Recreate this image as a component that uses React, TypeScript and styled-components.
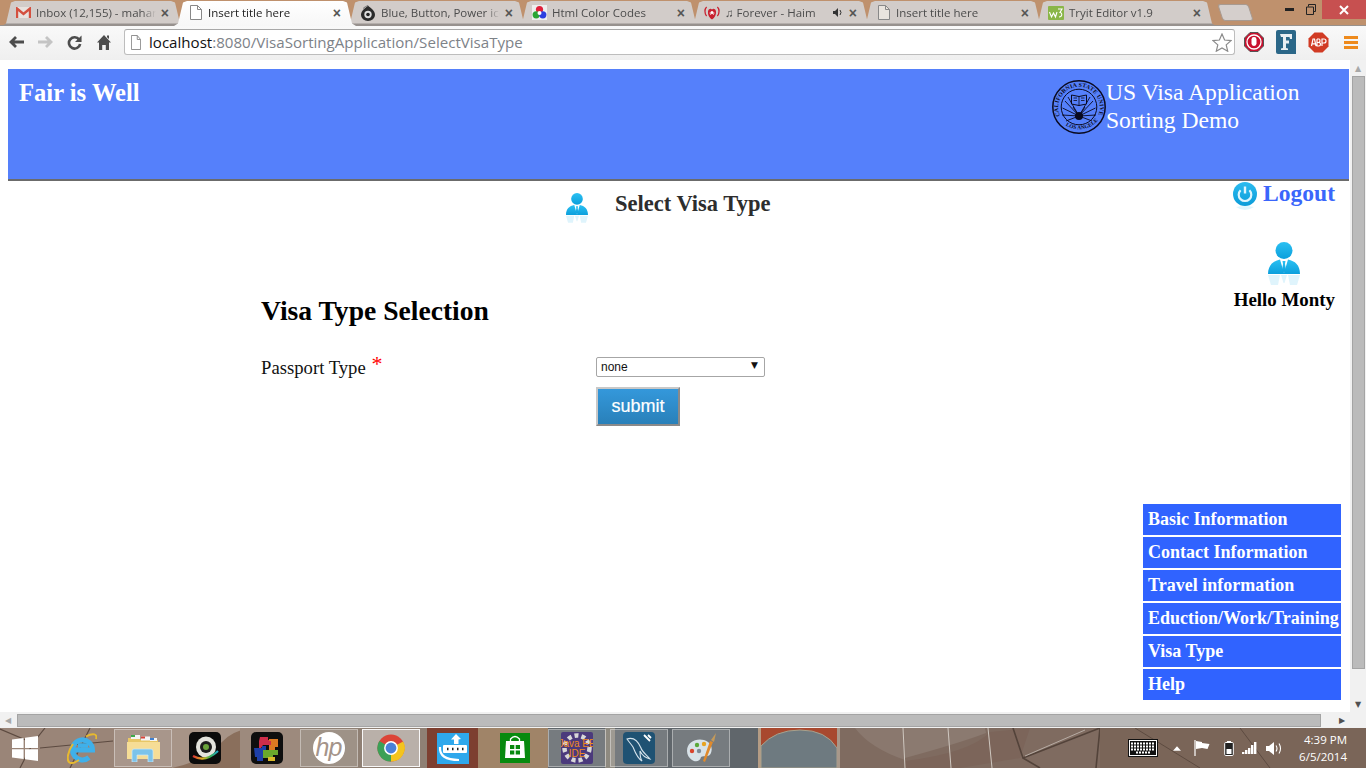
import React from 'react'
import styled, { createGlobalStyle } from 'styled-components'

const GlobalStyle = createGlobalStyle`
  html, body {
    margin: 0;
    padding: 0;
    width: 1366px;
    height: 768px;
    overflow: hidden;
    background: white;
  }
`

const Screen = styled.div`
  display: flex;
  flex-direction: column;
  width: 1366px;
  height: 768px;
  overflow: hidden;
`

/* browser frame */

const TabStrip = styled.div`
  display: flex;
  align-items: flex-end;
  height: 26px;
  padding-left: 2px;
  background: #bf916d;
  box-shadow: inset 0 -1px #98918c;
  position: relative;
`

const Tab = styled.div<{ $active?: boolean }>`
  position: relative;
  z-index: ${(p) => (p.$active ? 2 : 1)};
  display: flex;
  align-items: center;
  gap: 5px;
  flex: none;
  width: 182px;
  height: 25px;
  margin-right: -10px;
  padding: 0 15px 2px 14px;
  box-sizing: border-box;
  clip-path: polygon(0 100%, 4px 90%, 9px 6%, 13px 0, calc(100% - 13px) 0, calc(100% - 9px) 6%, calc(100% - 4px) 90%, 100% 100%);
  background: ${(p) =>
    p.$active
      ? 'linear-gradient(#ffffff, #f7f7f7)'
      : 'linear-gradient(#d2ccc9 0, #d2ccc9 22px, #97918e 23px)'};
  font: 11.5px 'Open Sans', 'Noto Sans', sans-serif;
  color: ${(p) => (p.$active ? '#222' : '#4c4c4c')};
`

const TabLabel = styled.span`
  flex: 1;
  min-width: 0;
  overflow: hidden;
  white-space: nowrap;
  mask-image: linear-gradient(to right, black calc(100% - 14px), transparent);
`

const TabClose = styled.span`
  flex: none;
  font: bold 14px 'Liberation Sans', sans-serif;
  color: #555;
`

const NewTab = styled.div`
  flex: none;
  width: 29px;
  height: 15px;
  margin: 0 0 5px 14px;
  background: #d5cfcc;
  border: 1px solid #a89a90;
  border-radius: 3px;
  transform: skewX(18deg);
`

const WindowButtons = styled.div`
  display: flex;
  align-items: flex-start;
  position: absolute;
  top: 0;
  right: 0;
`

const WindowButton = styled.div<{ $close?: boolean }>`
  display: flex;
  align-items: center;
  justify-content: center;
  width: ${(p) => (p.$close ? '44px' : '22px')};
  height: 19px;
  background: ${(p) => (p.$close ? '#c75050' : 'transparent')};
`

const Toolbar = styled.div`
  display: flex;
  align-items: center;
  height: 34px;
  padding: 0 0 2px 2px;
  box-sizing: border-box;
  background: linear-gradient(#f9f9f9, #efefef);
`

const NavIcon = styled.div`
  display: flex;
  align-items: center;
  justify-content: center;
  flex: none;
  width: 29px;
  height: 24px;
`

const Omnibox = styled.div`
  display: flex;
  align-items: center;
  gap: 8px;
  flex: none;
  width: 1111px;
  height: 26px;
  margin: 0 9px 0 6px;
  padding: 0 2px 0 6px;
  box-sizing: border-box;
  background: white;
  border: 1px solid #bdbdbd;
  border-top-color: #a8a8a8;
  border-radius: 3px;
  font: 15.1px 'Open Sans', 'Noto Sans', sans-serif;
  color: #7d8288;
`

const UrlText = styled.span`
  flex: 1;
  b {
    font-weight: normal;
    color: #111;
  }
`

const ExtensionIcons = styled.div`
  display: flex;
  align-items: center;
  flex: none;
  gap: 12px;
`

const MenuSlot = styled.div`
  display: flex;
  margin-left: 3px;
`

/* page */

const Viewport = styled.div`
  display: flex;
  flex-direction: column;
  flex: 1;
  min-height: 0;
`

const ViewportRow = styled.div`
  display: flex;
  flex: 1;
  min-height: 0;
`

const PageArea = styled.div`
  display: flex;
  flex-direction: column;
  flex: 1;
  min-width: 0;
  padding: 9px 1px 12px 8px;
  background: white;
`

const SiteHeader = styled.header`
  display: flex;
  justify-content: space-between;
  flex: none;
  height: 112px;
  padding: 9px 9px 0 11px;
  box-sizing: border-box;
  background: #5580fb;
  border-bottom: 2px solid #6b6b6b;
  color: white;
  font-family: 'Liberation Serif', serif;
`

const SiteName = styled.div`
  font-weight: bold;
  font-size: 24.6px;
  line-height: 30px;
`

const SiteBrand = styled.div`
  display: flex;
  width: 288px;
  padding-top: 2px;
`

const BrandText = styled.div`
  font-size: 23.6px;
  line-height: 28px;
  margin-top: -2px;
`

const PageBody = styled.div`
  display: flex;
  flex: 1;
  min-height: 0;
  font-family: 'Liberation Serif', serif;
`

const MainColumn = styled.main`
  flex: none;
  width: 1135px;
`

const TitleRow = styled.div`
  display: flex;
  align-items: flex-start;
  gap: 27px;
  padding: 11px 0 0 558px;
  height: 114px;
  box-sizing: border-box;
`

const TitleIcon = styled.div`
  flex: none;
  margin-top: 1px;
`

const PageTitle = styled.h2`
  margin: 0;
  font-size: 22.5px;
  line-height: 24px;
  font-weight: bold;
  color: #2d2d2d;
`

const FormSection = styled.section`
  padding-left: 253px;
`

const FormHeading = styled.h1`
  margin: 0 0 30px;
  font-size: 27.6px;
  line-height: 32px;
  font-weight: bold;
  color: black;
`

const FormGrid = styled.form`
  display: grid;
  grid-template-columns: 335px 169px;
  row-gap: 8px;
  align-items: start;
`

const FieldLabel = styled.label`
  font-size: 18.7px;
  line-height: 22px;
  color: #111;
`

const Required = styled.span`
  margin-left: 1px;
  font-size: 22px;
  line-height: 10px;
  color: #f00;
  vertical-align: 3px;
`

const SelectWrap = styled.div`
  position: relative;
  height: 20px;
  &::after {
    content: '▼';
    position: absolute;
    top: 3px;
    right: 7px;
    font: 9px 'DejaVu Sans', sans-serif;
    color: #111;
    pointer-events: none;
  }
`

const PlainSelect = styled.select`
  appearance: none;
  display: block;
  width: 100%;
  height: 20px;
  padding: 0 0 0 4px;
  background: white;
  border: 1px solid #a6a6a6;
  border-radius: 2px;
  font: 12px 'Liberation Sans', sans-serif;
  color: #111;
`

const SubmitButton = styled.button`
  grid-column: 2;
  justify-self: start;
  width: 84px;
  height: 39px;
  padding: 0;
  background: linear-gradient(#3498db, #2980b9);
  border: 2px solid;
  border-color: #c8c8c8 #8a8a8a #8a8a8a #c8c8c8;
  font: 18px 'Liberation Sans', sans-serif;
  color: white;
  -webkit-text-stroke: 0.2px white;
`

const SideColumn = styled.aside`
  display: flex;
  flex-direction: column;
  align-items: flex-end;
  flex: none;
  width: 198px;
`

const LogoutRow = styled.a`
  display: flex;
  align-items: flex-start;
  gap: 6px;
  margin: 1px 6px 0 0;
  font-size: 23.6px;
  line-height: 24px;
  font-weight: bold;
  color: #3a66fb;
`

const LogoutText = styled.span`
  margin-top: -1px;
`

const UserBlock = styled.div`
  display: flex;
  flex-direction: column;
  align-items: center;
  margin: 30px 6px 0 0;
`

const Greeting = styled.div`
  margin-top: 5px;
  font-size: 18.9px;
  line-height: 20px;
  font-weight: bold;
  color: black;
`

const SideNav = styled.nav`
  display: flex;
  flex-direction: column;
  gap: 2px;
  width: 198px;
  margin-top: auto;
`

const SideNavItem = styled.a`
  display: block;
  height: 31px;
  padding-left: 5px;
  background: #3063ff;
  font-size: 18px;
  line-height: 31px;
  font-weight: bold;
  color: white;
  white-space: nowrap;
`

/* scrollbars */

const VScroll = styled.div`
  display: flex;
  flex-direction: column;
  align-items: center;
  justify-content: space-between;
  flex: none;
  width: 16px;
  background: #f1f1f1;
`

const HScroll = styled.div`
  display: flex;
  align-items: center;
  flex: none;
  height: 16px;
  background: #f1f1f1;
`

const ScrollArrow = styled.div<{ $dim?: boolean }>`
  display: flex;
  align-items: center;
  justify-content: center;
  flex: none;
  width: 16px;
  height: 16px;
  font: 8px 'DejaVu Sans', sans-serif;
  color: ${(p) => (p.$dim ? '#a8a8a8' : '#505050')};
`

const HScrollEnd = styled(ScrollArrow)`
  margin: 0 16px 0 auto;
`

const VThumb = styled.div`
  flex: 1;
  width: 13px;
  margin-bottom: 27px;
  background: #bbbbbb;
  border: 1px solid #a4a4a4;
  box-sizing: border-box;
`

const HThumb = styled.div`
  flex: none;
  width: 1304px;
  height: 13px;
  margin-left: 1px;
  background: #bbbbbb;
  border: 1px solid #a4a4a4;
  box-sizing: border-box;
`

/* taskbar */

const Taskbar = styled.footer`
  position: relative;
  display: flex;
  align-items: stretch;
  flex: none;
  height: 40px;
  background: #7e6c62;
  overflow: hidden;
`

const Wallpaper = styled.svg`
  position: absolute;
  inset: 0;
`

const StartSlot = styled.div`
  position: relative;
  display: flex;
  align-items: center;
  flex: none;
  width: 114px;
  padding-left: 12px;
  box-sizing: border-box;
  gap: 29px;
`

const AppSlots = styled.div`
  position: relative;
  display: flex;
  flex: none;
  gap: 4px;
  padding: 1px 0;
`

const AppSlot = styled.div<{ $open?: boolean; $focused?: boolean }>`
  display: flex;
  align-items: center;
  justify-content: center;
  flex: none;
  width: 58px;
  box-sizing: border-box;
  border: 1px solid
    ${(p) => (p.$focused ? 'rgba(255,255,255,0.9)' : p.$open ? 'rgba(255,255,255,0.38)' : 'transparent')};
  background: ${(p) =>
    p.$focused ? 'rgba(255,255,255,0.38)' : p.$open ? 'rgba(255,255,255,0.14)' : 'transparent'};
`

const SystemTray = styled.div`
  position: relative;
  display: flex;
  align-items: center;
  margin-left: auto;
  padding-right: 19px;
`

const TrayItem = styled.div<{ $left: number }>`
  display: flex;
  flex: none;
  margin-left: ${(p) => p.$left}px;
`

const Clock = styled.div`
  display: flex;
  flex-direction: column;
  align-items: flex-end;
  margin-left: 17px;
  font: 11.5px/17px 'Open Sans', 'Noto Sans', sans-serif;
  color: white;
`

/* drawings */

const PersonIcon: React.FC<{ size: number; id: string }> = ({ size, id }) => (
  <svg width={size} height={size * 1.35} viewBox="0 0 32 43" style={{ display: 'block' }}>
    <defs>
      <linearGradient id={id} x1="0" y1="0" x2="0" y2="1">
        <stop offset="0" stopColor="#2bc0f2" />
        <stop offset="1" stopColor="#0b9fdc" />
      </linearGradient>
    </defs>
    <circle cx="16" cy="8.5" r="8.5" fill={`url(#${id})`} />
    <path d="M0 32 C0 23 5 19 12 17.5 L16 31 L20 17.5 C27 19 32 23 32 32 Z" fill={`url(#${id})`} />
    <path d="M14.5 19 h3 l-.5 3 1 6 -2 3 -2-3 1-6z" fill={`url(#${id})`} />
    <path d="M0 33 H12 L10 43 H3 Z M20 33 H32 L29 43 H22 Z M13 33 H19 L16.5 41 H15.5 Z" fill="#c4ebfa" opacity=".55" />
  </svg>
)

const PowerIcon = () => (
  <svg width="24" height="30" viewBox="0 0 24 30" style={{ flex: 'none', display: 'block' }}>
    <defs>
      <linearGradient id="powerBlue" x1="0" y1="0" x2="0" y2="1">
        <stop offset="0" stopColor="#2bbcf0" />
        <stop offset="1" stopColor="#0b9bd8" />
      </linearGradient>
    </defs>
    <circle cx="12" cy="12" r="12" fill="url(#powerBlue)" />
    <path d="M7.6 8.2 A6.3 6.3 0 1 0 16.4 8.2" fill="none" stroke="#dff5fd" strokeWidth="2.2" />
    <path d="M12 4.5 V11.5" stroke="#dff5fd" strokeWidth="2.4" />
    <path d="M3 25 Q12 31 21 25 Q12 23 3 25Z" fill="#c9eefb" opacity=".6" />
  </svg>
)

const SealLogo = () => (
  <svg width="54" height="54" viewBox="0 0 54 54" style={{ flex: 'none', display: 'block' }}>
    <circle cx="27" cy="27" r="26.2" fill="none" stroke="#0a0a20" strokeWidth="1.5" />
    <circle cx="27" cy="27" r="17.8" fill="none" stroke="#0a0a20" strokeWidth="1" />
    <defs>
      <path id="sealTop" d="M8 36 A20.8 20.8 0 1 1 46 36" />
      <path id="sealBottom" d="M9 41.5 A24.6 24.6 0 0 0 45 41.5" />
    </defs>
    <text fontFamily="Liberation Serif, serif" fontSize="5.9" fontWeight="bold" fill="#0a0a20" letterSpacing=".15">
      <textPath href="#sealTop">CALIFORNIA STATE UNIVERSITY</textPath>
    </text>
    <text fontFamily="Liberation Serif, serif" fontSize="5.4" fontWeight="bold" fill="#0a0a20" letterSpacing=".1">
      <textPath href="#sealBottom" startOffset="6">LOS ANGELES</textPath>
    </text>
    <path d="M27 36 L13 21 M27 36 L16 17 M27 36 L38 17 M27 36 L41 21 M27 36 L10.5 28 M27 36 L43.5 28 M27 36 L10 35 M27 36 L44 35 M27 36 L14 41 M27 36 L40 41 M27 36 L21 27 M27 36 L33 27" stroke="#0a0a20" strokeWidth=".9" />
    <path d="M19.5 15 L27 16.5 L34.5 15 V24 L27 25.5 L19.5 24Z" fill="#5580fb" stroke="#0a0a20" strokeWidth="1" />
    <path d="M27 16.5 V25.5 M21.5 18 H25 M21.5 20.5 H25 M29 18 H32.5 M29 20.5 H32.5" stroke="#0a0a20" strokeWidth=".8" />
    <circle cx="27" cy="36" r="4" fill="#0a0a20" />
  </svg>
)

const PageFile: React.FC<{ dim?: boolean; width?: number }> = ({ dim, width = 12 }) => (
  <svg width={width} height="15" viewBox="0 0 12 15" preserveAspectRatio="none" style={{ flex: 'none' }}>
    <path d="M.5.5 H7.5 L11.5 4.5 V14.5 H.5Z" fill={dim ? '#e9e4de' : 'white'} stroke="#888" />
    <path d="M7.5.5 V4.5 H11.5" fill="none" stroke="#888" />
  </svg>
)

const TabPageFile = styled.span`
  display: flex;
  flex: none;
  margin: 0 1px 0 2px;
`

const GmailIcon = () => (
  <svg width="15" height="11" viewBox="0 0 15 11" style={{ flex: 'none' }}>
    <rect width="15" height="11" fill="#e8e2de" />
    <path d="M1 11 V1.5 L7.5 7 L14 1.5 V11" fill="none" stroke="#d4503f" strokeWidth="2.4" />
  </svg>
)

const EyeFavicon = () => (
  <svg width="16" height="16" viewBox="0 0 16 16" style={{ flex: 'none' }}>
    <path d="M8 .5 C10 3 15 5 15 10 A7 6 0 0 1 1 10 C1 5 6 3 8 .5Z" fill="#2b2b2b" />
    <circle cx="8" cy="9.5" r="3.7" fill="#ddd" />
    <circle cx="8" cy="9.5" r="1.8" fill="#222" />
    <path d="M3 3.5 Q5 1.5 8 .5" fill="none" stroke="#777" />
  </svg>
)

const ColorWheel = () => (
  <svg width="15" height="15" viewBox="0 0 15 15" style={{ flex: 'none' }}>
    <rect width="15" height="15" fill="#eee" />
    <circle cx="7.5" cy="4.6" r="3.6" fill="#e0203a" />
    <circle cx="4.2" cy="9.8" r="3.6" fill="#2aa534" />
    <circle cx="10.8" cy="9.8" r="3.6" fill="#2c3fe0" />
    <circle cx="7.5" cy="8" r="2" fill="white" />
  </svg>
)

const RadioIcon = () => (
  <svg width="16" height="14" viewBox="0 0 16 14" style={{ flex: 'none' }}>
    <path d="M8 13.5 C3 10 3.6 4.6 4.8 3.4 C6 2.2 7.3 2.6 8 3.6 C8.7 2.6 10 2.2 11.2 3.4 C12.4 4.6 13 10 8 13.5Z" fill="#c8202f" />
    <path d="M2.6 10 C.2 7 .6 3 2.6 1 M13.4 10 C15.8 7 15.4 3 13.4 1" fill="none" stroke="#c8202f" strokeWidth="1.3" />
    <circle cx="8" cy="6.5" r="1.5" fill="white" />
    <path d="M6 6.5 Q6 8 7 9 M10 6.5 Q10 8 9 9" fill="none" stroke="white" strokeWidth=".7" />
  </svg>
)

const W3Icon = () => (
  <svg width="16" height="14" viewBox="0 0 16 14" style={{ flex: 'none' }}>
    <rect width="16" height="14" rx="1" fill="#8ab648" />
    <path d="M1.5 6 L3.5 11 L5.5 7 L7.5 11 L9 6 M10 3 H14 L12 6.5 C14.5 6.5 14.5 11 11 11" fill="none" stroke="white" strokeWidth="1.1" />
  </svg>
)

const SpeakerSmall = () => (
  <svg width="11" height="11" viewBox="0 0 11 11" style={{ flex: 'none' }}>
    <path d="M0 4 H2 L5 1 V10 L2 7 H0Z" fill="#333" />
    <path d="M7 3 Q9 5.5 7 8" fill="none" stroke="#333" />
  </svg>
)

const BackIcon = () => (
  <svg width="15" height="12" viewBox="0 0 15 12">
    <path d="M7 1 L2 6 L7 11 M2.5 6 H15" fill="none" stroke="#4d4d4d" strokeWidth="2.8" />
  </svg>
)

const ForwardIcon = () => (
  <svg width="15" height="12" viewBox="0 0 15 12">
    <path d="M8 1 L13 6 L8 11 M12.5 6 H0" fill="none" stroke="#c4c4c4" strokeWidth="2.8" />
  </svg>
)

const ReloadIcon = () => (
  <svg width="15" height="15" viewBox="0 0 16 16">
    <path d="M13 5 A6 6 0 1 0 14 9.5" fill="none" stroke="#4d4d4d" strokeWidth="2.8" />
    <path d="M15.5 .5 V7.5 H8.5Z" fill="#4d4d4d" />
  </svg>
)

const HomeIcon = () => (
  <svg width="14" height="15" viewBox="0 0 14 15">
    <path d="M7 0 L14 7.5 H12 V15 H8.8 V10 H5.2 V15 H2 V7.5 H0Z M10 .5 H12 V4 L10 2.2Z" fill="#4d4d4d" />
  </svg>
)

const StarIcon = () => (
  <svg width="20" height="19" viewBox="0 0 20 19" style={{ flex: 'none' }}>
    <path d="M10 1 L12.6 7 L19 7.6 L14.2 11.9 L15.7 18.2 L10 14.9 L4.3 18.2 L5.8 11.9 L1 7.6 L7.4 7Z" fill="white" stroke="#8a8a8a" strokeWidth="1.2" />
  </svg>
)

const StopIcon = () => (
  <svg width="20" height="20" viewBox="0 0 20 20" style={{ display: 'block' }}>
    <path d="M6 .5 H14 L19.5 6 V14 L14 19.5 H6 L.5 14 V6Z" fill="#c8102e" stroke="#555" />
    <circle cx="10" cy="10" r="7" fill="none" stroke="white" strokeWidth="1.3" />
    <rect x="7.5" y="5" width="5" height="9" rx="2.4" fill="white" />
  </svg>
)

const FeedlyIcon = () => (
  <svg width="20" height="24" viewBox="0 0 20 24" style={{ display: 'block' }}>
    <path d="M0 2 Q0 0 2 0 H18 Q20 0 20 2 V24 H2 Q0 24 0 22Z" fill="#2b6788" />
    <path d="M4 4 H16 V9 H14 L13.5 7 H10 V10.5 H13 V13.5 H10 V18 L12 18.5 V20 H5 V18.5 L7 18 V7 H5Z" fill="#e8eef2" />
  </svg>
)

const AbpIcon = () => (
  <svg width="21" height="21" viewBox="0 0 21 21" style={{ display: 'block' }}>
    <path d="M6.5 .5 H14.5 L20.5 6.5 V14.5 L14.5 20.5 H6.5 L.5 14.5 V6.5Z" fill="#d13b24" />
    <path d="M3.5 14 L5 7 H6.5 L8 14 M4 11.8 H7.5 M9 7 V14 H11 Q12.5 14 12.5 12.3 Q12.5 10.5 10.5 10.5 H9 M9 7 H11 Q12 7 12 8.7 Q12 10.5 10 10.5 M14 14 V7 H16 Q18 7 18 9 Q18 11 16 11 H14" fill="none" stroke="white" strokeWidth="1.2" />
  </svg>
)

const MenuIcon = () => (
  <svg width="14" height="13" viewBox="0 0 14 13">
    <path d="M0 0 H14 V3 H0Z M0 5 H14 V8 H0Z M0 10 H14 V13 H0Z" fill="#ee8a1c" />
  </svg>
)

const WinLogo = () => (
  <svg width="26" height="25" viewBox="0 0 26 25" style={{ flex: 'none' }}>
    <path d="M0 3.6 L11.6 2 V12 H0Z M13 1.8 L26 0 V12 H13Z M0 13.2 H11.6 V23 L0 21.4Z M13 13.2 H26 V25 L13 23.2Z" fill="white" />
  </svg>
)

const IeLogo = () => (
  <svg width="30" height="31" viewBox="0 0 30 31" style={{ flex: 'none' }}>
    <path d="M7 17 H25.5 A10 10 0 1 0 22 24.5" fill="none" stroke="#3fb0ea" strokeWidth="5" />
    <path d="M11 12.5 H21" stroke="#3fb0ea" strokeWidth="4.5" />
    <path d="M19 3.5 C26 -.5 31 1 29 6 M6 11 C1 18 -1 27 2.5 29.5 C5 31 9 29 12 27" fill="none" stroke="#e7b92f" strokeWidth="2" />
  </svg>
)

const FolderIcon = () => (
  <svg width="33" height="28" viewBox="0 0 33 28">
    <path d="M1 4 H12 L14 6 H31 V12 H1Z" fill="#e8c766" />
    <rect x="4" y="1" width="9" height="4" fill="#f5f5f5" />
    <rect x="4" y="1" width="4" height="2" fill="#3caa4a" />
    <rect x="14" y="2.5" width="9" height="4" fill="#f5f5f5" />
    <rect x="14" y="2.5" width="4" height="2" fill="#d6453a" />
    <rect x="23" y="4" width="7" height="3" fill="#f5f5f5" />
    <rect x="23" y="4" width="4" height="2" fill="#3f7fd0" />
    <path d="M0 8 H33 V25 H0Z" fill="#f6dd96" />
    <path d="M5 28 V17 Q5 15 7 15 H24 Q26 15 26 17 V28 H21 V21 H10 V28Z" fill="#7cc3ea" stroke="#cdeafa" strokeWidth=".7" />
  </svg>
)

const EyeApp = () => (
  <svg width="32" height="32" viewBox="0 0 32 32">
    <defs>
      <linearGradient id="rainbowArc" x1="0" y1="0" x2="1" y2="0">
        <stop offset="0" stopColor="#d33" />
        <stop offset=".4" stopColor="#db2" />
        <stop offset=".7" stopColor="#3a5" />
        <stop offset="1" stopColor="#2ac" />
      </linearGradient>
    </defs>
    <rect width="32" height="32" rx="5" fill="#0b0b0b" />
    <ellipse cx="17" cy="15" rx="10" ry="10.5" fill="#e3e3dc" />
    <circle cx="17" cy="15" r="6" fill="#1c1c1c" />
    <circle cx="17" cy="15" r="3" fill="#69a33a" />
    <path d="M4 24 Q16 31 29 19" fill="none" stroke="url(#rainbowArc)" strokeWidth="2.2" />
  </svg>
)

const PuzzleApp = () => (
  <svg width="32" height="32" viewBox="0 0 32 32">
    <rect width="32" height="32" rx="5" fill="#0e0e0e" />
    <path d="M9 5 H17 V8 H20 V13 H12 L10 16 H8 V9Z" fill="#cf2e4a" />
    <path d="M18 7 H27 V15 H24 V19 H18 V13 H20 V9 H18Z" fill="#dd7a22" />
    <path d="M3 16 H11 V14 H15 V20 H12 V25 H4 Z" fill="#1e3fa8" />
    <path d="M12 18 H27 V23 H22 V26 H12Z" fill="#6aa82c" />
    <path d="M17 25 H24 V29 H17Z" fill="#d9b92a" />
    <path d="M6 25 H12 V29 H6Z" fill="#1e3fa8" />
  </svg>
)

const HpLogo = () => (
  <svg width="32" height="32" viewBox="0 0 32 32">
    <circle cx="16" cy="16" r="16" fill="white" />
    <text x="15.5" y="24" textAnchor="middle" fontFamily="Liberation Sans, sans-serif" fontStyle="italic" fontSize="25" letterSpacing="-1" fill="#a4948a">hp</text>
  </svg>
)

const ChromeLogo = () => (
  <svg width="28" height="28" viewBox="0 0 30 30">
    <circle cx="15" cy="15" r="14.5" fill="#dc4437" />
    <path d="M15 15 L28 8 A14.5 14.5 0 0 1 15 29.5Z" fill="#f3c41e" />
    <path d="M15 15 L15 29.5 A14.5 14.5 0 0 1 2.5 7.5Z" fill="#3ba057" />
    <circle cx="15" cy="15" r="7.4" fill="white" />
    <circle cx="15" cy="15" r="5.8" fill="#4b80d8" />
  </svg>
)

const KeyApp = () => (
  <svg width="32" height="31" viewBox="0 0 32 31">
    <rect width="32" height="31" fill="#2fa8ec" />
    <path d="M19 1 L24 6 L21.5 6.5 V11 H17 V6.5 L14 6.5Z" fill="white" />
    <rect x="6" y="12" width="24" height="8" rx="1" fill="white" />
    <path d="M10 16 h1.5 M15 16 h1.5 M20 16 h1.5 M25 16 h1.5" stroke="#222" strokeWidth="2.6" />
    <path d="M3 14 Q2 27 22 27" fill="none" stroke="white" strokeWidth="2.2" />
  </svg>
)

const StoreApp = () => (
  <svg width="30" height="30" viewBox="0 0 30 30">
    <rect width="30" height="30" fill="#078a0f" />
    <path d="M6 8 H24 L25 25 H5Z" fill="white" />
    <path d="M10.5 8 V6 Q15 1 19.5 6 V8" fill="none" stroke="white" strokeWidth="1.3" />
    <path d="M10 12 H14.3 V16 H10Z M15.7 12 H20 V16 H15.7Z M10 17.4 H14.3 V21.5 H10Z M15.7 17.4 H20 V21.5 H15.7Z" fill="#078a0f" />
  </svg>
)

const JavaApp = () => (
  <svg width="32" height="32" viewBox="0 0 32 32">
    <rect width="32" height="32" rx="2" fill="#4b3a7c" />
    <circle cx="16" cy="16" r="12.5" fill="none" stroke="#d8d8d8" strokeWidth="4.5" strokeDasharray="4 3" />
    <text x="16" y="15" textAnchor="middle" fontFamily="Liberation Sans, sans-serif" fontSize="10" fill="#f08a1c">Java EE</text>
    <text x="16" y="25" textAnchor="middle" fontFamily="Liberation Sans, sans-serif" fontSize="10" fill="#f08a1c">IDE</text>
  </svg>
)

const MysqlApp = () => (
  <svg width="32" height="32" viewBox="0 0 32 32">
    <rect width="32" height="32" rx="4" fill="#1f5273" />
    <path d="M4 7 C10 5 15 9 18 16 C19 20 24 23 27 27 C23 26 19 23 17 19 C17 23 17 26 19 29 C14 26 12 20 10 15 C8 12 6 10 4 7Z" fill="none" stroke="#d5e3ec" strokeWidth="1.1" />
    <path d="M21 3 L27 9 M25 3 L28 6" stroke="white" strokeWidth="1.8" />
  </svg>
)

const PaintApp = () => (
  <svg width="31" height="30" viewBox="0 0 31 30">
    <path d="M1 18 C1 9 10 5 18 7 C25 9 27 15 25 20 C23 25 18 22 15 24 C14 29 9 29 6 27 C3 25 1 22 1 18Z" fill="#d8e2e8" />
    <circle cx="6" cy="18" r="2.2" fill="#d9442c" />
    <circle cx="11" cy="12" r="2.2" fill="#5ba83a" />
    <circle cx="18" cy="11" r="2.2" fill="#e8a321" />
    <circle cx="13" cy="18" r="2.2" fill="#7d8a96" />
    <path d="M24 8 L27 9 L19 29 L17 28Z" fill="#e08a2c" />
    <path d="M25 7 L30 0 L28 9Z" fill="#c49a5a" />
  </svg>
)

const Wall = () => (
  <Wallpaper width="1366" height="40" viewBox="0 0 1366 40">
    <rect width="1366" height="40" fill="#7f6b60" />
    <rect width="172" height="40" fill="#9a8578" />
    <path d="M0 1 L33 15 L45 0 M33 15 L20 40 M40 20 L113 13 M90 0 L70 40" stroke="#5c4a40" strokeWidth="1.2" fill="none" />
    <rect x="172" width="128" height="40" fill="#a79487" />
    <path d="M172 40 Q205 33 222 14 Q232 3 250 0 H300 V40Z" fill="#8a6f5c" />
    <path d="M240 40 V0 H300 V40Z" fill="#9d8a7d" />
    <rect x="300" width="127" height="40" fill="#8f8074" />
    <rect x="427" width="51" height="40" fill="#7d3f30" />
    <rect x="478" width="70" height="40" fill="#a08468" />
    <rect x="548" width="212" height="40" fill="#60666b" />
    <rect x="605" width="10" height="40" fill="#8e8a80" />
    <rect x="758" width="3" height="40" fill="#b59c84" />
    <rect x="761" width="76" height="40" fill="#a8492f" />
    <path d="M761 18 Q775 2 800 2 Q826 2 837 20 V40 H761Z" fill="#6e7a80" stroke="#a8a18c" strokeWidth="1" />
    <rect x="837" width="3" height="40" fill="#a8988a" />
    <path d="M840 0 H905 V32 Q870 20 855 0Z" fill="#8a786e" />
    <path d="M905 33 Q970 25 990 4 L1030 0 L1020 30 L960 40 H905Z" fill="#7c655a" />
    <path d="M905 0 H985 L986 5 Q960 15 905 30Z" fill="#8b7a70" />
    <path d="M903 0 L905 40 M948 0 L951 40 M988 0 L992 40" stroke="#cfc8c0" strokeWidth="1" fill="none" />
    <path d="M1013 0 L1023 30 L1100 0 M1023 30 L1040 40 M1100 0 L1096 40 M1140 0 L1120 40" stroke="#53433a" strokeWidth="1.6" fill="none" />
    <path d="M1025 28 L1085 2" stroke="#b7aca4" strokeWidth="1" />
    <path d="M1100 0 H1366 V40 H1100Z" fill="#7a6558" />
    <path d="M1135 0 L1200 40 M1240 0 L1270 40" stroke="#5d4b40" strokeWidth="1" fill="none" />
  </Wallpaper>
)

const KeyboardTray = () => (
  <svg width="30" height="18" viewBox="0 0 30 18" style={{ display: 'block' }}>
    <rect x=".5" y=".5" width="29" height="17" fill="white" stroke="#111" />
    <rect x="2" y="2" width="26" height="14" fill="#111" />
    <path d="M3 4.5 H27 M3 7.5 H27 M3 10.5 H27 M8 13.5 H22" stroke="white" strokeWidth="1.8" strokeDasharray="2 1" />
  </svg>
)

const TrayCaret = () => (
  <svg width="8" height="5" viewBox="0 0 9 5" style={{ display: 'block' }}><path d="M0 5 L4.5 0 L9 5Z" fill="white" /></svg>
)

const TrayFlag = () => (
  <svg width="16" height="16" viewBox="0 0 16 16" style={{ display: 'block' }}>
    <path d="M1 0 V16" stroke="white" strokeWidth="1.2" />
    <path d="M2 1 L8 2 L8 3 L15.5 4 L13.5 9 L8 8 L2 9Z" fill="white" />
  </svg>
)

const TrayBattery = () => (
  <svg width="10" height="15" viewBox="0 0 10 15" style={{ display: 'block' }}>
    <rect x=".7" y="1.5" width="8.6" height="13" rx="1" fill="#222" stroke="white" />
    <rect x="3" y="0" width="4" height="2" fill="white" />
    <rect x="2.5" y="8" width="5" height="5" fill="white" />
  </svg>
)

const TraySignal = () => (
  <svg width="15" height="12" viewBox="0 0 15 12" style={{ display: 'block' }}>
    <path d="M0 10 h2.4 v2 h-2.4z M3 8 h2.4 v4 h-2.4z M6 6 h2.4 v6 h-2.4z M9 3 h2.4 v9 h-2.4z M12 0 h2.4 v12 h-2.4z" fill="white" />
  </svg>
)

const TraySound = () => (
  <svg width="16" height="13" viewBox="0 0 16 13" style={{ display: 'block' }}>
    <path d="M0 4 H3 L8 0 V13 L3 9 H0Z" fill="white" />
    <path d="M10 3.5 Q12 6.5 10 9.5 M13 1.5 Q16 6.5 13 11.5" fill="none" stroke="white" strokeWidth="1.1" />
  </svg>
)

const tabs = [
  { label: 'Inbox (12,155) - maharshi', icon: <GmailIcon /> },
  { label: 'Insert title here', icon: <TabPageFile><PageFile /></TabPageFile>, active: true },
  { label: 'Blue, Button, Power icon', icon: <EyeFavicon /> },
  { label: 'Html Color Codes', icon: <ColorWheel /> },
  { label: '♫ Forever - Haim', icon: <RadioIcon />, sound: true },
  { label: 'Insert title here', icon: <TabPageFile><PageFile dim /></TabPageFile> },
  { label: 'Tryit Editor v1.9', icon: <W3Icon /> },
]

const navItems = [
  'Basic Information',
  'Contact Information',
  'Travel information',
  'Eduction/Work/Training',
  'Visa Type',
  'Help',
]

const apps = [
  { key: 'files', icon: <FolderIcon />, open: true },
  { key: 'eye', icon: <EyeApp /> },
  { key: 'puzzle', icon: <PuzzleApp /> },
  { key: 'hp', icon: <HpLogo />, open: true },
  { key: 'chrome', icon: <ChromeLogo />, focused: true },
  { key: 'key', icon: <KeyApp /> },
  { key: 'store', icon: <StoreApp /> },
  { key: 'java', icon: <JavaApp />, open: true },
  { key: 'mysql', icon: <MysqlApp />, open: true },
  { key: 'paint', icon: <PaintApp />, open: true },
]

const App: React.FC = () => (
  <Screen>
    <GlobalStyle />
    <TabStrip>
      {tabs.map((tab, i) => (
        <Tab key={i} $active={tab.active}>
          {tab.icon}
          <TabLabel>{tab.label}</TabLabel>
          {tab.sound && <SpeakerSmall />}
          <TabClose>×</TabClose>
        </Tab>
      ))}
      <NewTab />
      <WindowButtons>
        <WindowButton>
          <svg width="9" height="3"><rect width="9" height="3" fill="#222" /></svg>
        </WindowButton>
        <WindowButton>
          <svg width="10" height="11" viewBox="0 0 10 11">
            <path d="M2.5 2.5 V.5 H9.5 V7.5 H7.5 M.5 3 H7.5 V10.5 H.5Z" fill="none" stroke="#222" />
          </svg>
        </WindowButton>
        <WindowButton $close>
          <svg width="10" height="10" viewBox="0 0 10 10">
            <path d="M1 1 L9 9 M9 1 L1 9" stroke="white" strokeWidth="2" />
          </svg>
        </WindowButton>
      </WindowButtons>
    </TabStrip>

    <Toolbar>
      <NavIcon><BackIcon /></NavIcon>
      <NavIcon><ForwardIcon /></NavIcon>
      <NavIcon><ReloadIcon /></NavIcon>
      <NavIcon><HomeIcon /></NavIcon>
      <Omnibox>
        <PageFile width={10} />
        <UrlText><b>localhost</b>:8080/VisaSortingApplication/SelectVisaType</UrlText>
        <StarIcon />
      </Omnibox>
      <ExtensionIcons>
        <StopIcon />
        <FeedlyIcon />
        <AbpIcon />
        <MenuSlot><MenuIcon /></MenuSlot>
      </ExtensionIcons>
    </Toolbar>

    <Viewport>
      <ViewportRow>
        <PageArea>
          <SiteHeader>
            <SiteName>Fair is Well</SiteName>
            <SiteBrand>
              <SealLogo />
              <BrandText>US Visa Application<br />Sorting Demo</BrandText>
            </SiteBrand>
          </SiteHeader>
          <PageBody>
            <MainColumn>
              <TitleRow>
                <TitleIcon><PersonIcon size={22} id="personSmall" /></TitleIcon>
                <PageTitle>Select Visa Type</PageTitle>
              </TitleRow>
              <FormSection>
                <FormHeading>Visa Type Selection</FormHeading>
                <FormGrid>
                  <FieldLabel>Passport Type <Required>*</Required></FieldLabel>
                  <SelectWrap>
                    <PlainSelect defaultValue="none">
                      <option value="none">none</option>
                    </PlainSelect>
                  </SelectWrap>
                  <SubmitButton type="button">submit</SubmitButton>
                </FormGrid>
              </FormSection>
            </MainColumn>
            <SideColumn>
              <LogoutRow>
                <PowerIcon />
                <LogoutText>Logout</LogoutText>
              </LogoutRow>
              <UserBlock>
                <PersonIcon size={32} id="personLarge" />
                <Greeting>Hello Monty</Greeting>
              </UserBlock>
              <SideNav>
                {navItems.map((item) => (
                  <SideNavItem key={item}>{item}</SideNavItem>
                ))}
              </SideNav>
            </SideColumn>
          </PageBody>
        </PageArea>
        <VScroll>
          <ScrollArrow $dim>▲</ScrollArrow>
          <VThumb />
          <ScrollArrow>▼</ScrollArrow>
        </VScroll>
      </ViewportRow>
      <HScroll>
        <ScrollArrow $dim>◀</ScrollArrow>
        <HThumb />
        <HScrollEnd>▶</HScrollEnd>
      </HScroll>
    </Viewport>

    <Taskbar>
      <Wall />
      <StartSlot>
        <WinLogo />
        <IeLogo />
      </StartSlot>
      <AppSlots>
        {apps.map((app) => (
          <AppSlot key={app.key} $open={app.open} $focused={app.focused}>
            {app.icon}
          </AppSlot>
        ))}
      </AppSlots>
      <SystemTray>
        <TrayItem $left={0}><KeyboardTray /></TrayItem>
        <TrayItem $left={15}><TrayCaret /></TrayItem>
        <TrayItem $left={13}><TrayFlag /></TrayItem>
        <TrayItem $left={14}><TrayBattery /></TrayItem>
        <TrayItem $left={8}><TraySignal /></TrayItem>
        <TrayItem $left={9}><TraySound /></TrayItem>
        <Clock>
          <span>4:39 PM</span>
          <span>6/5/2014</span>
        </Clock>
      </SystemTray>
    </Taskbar>
  </Screen>
)

export default App
